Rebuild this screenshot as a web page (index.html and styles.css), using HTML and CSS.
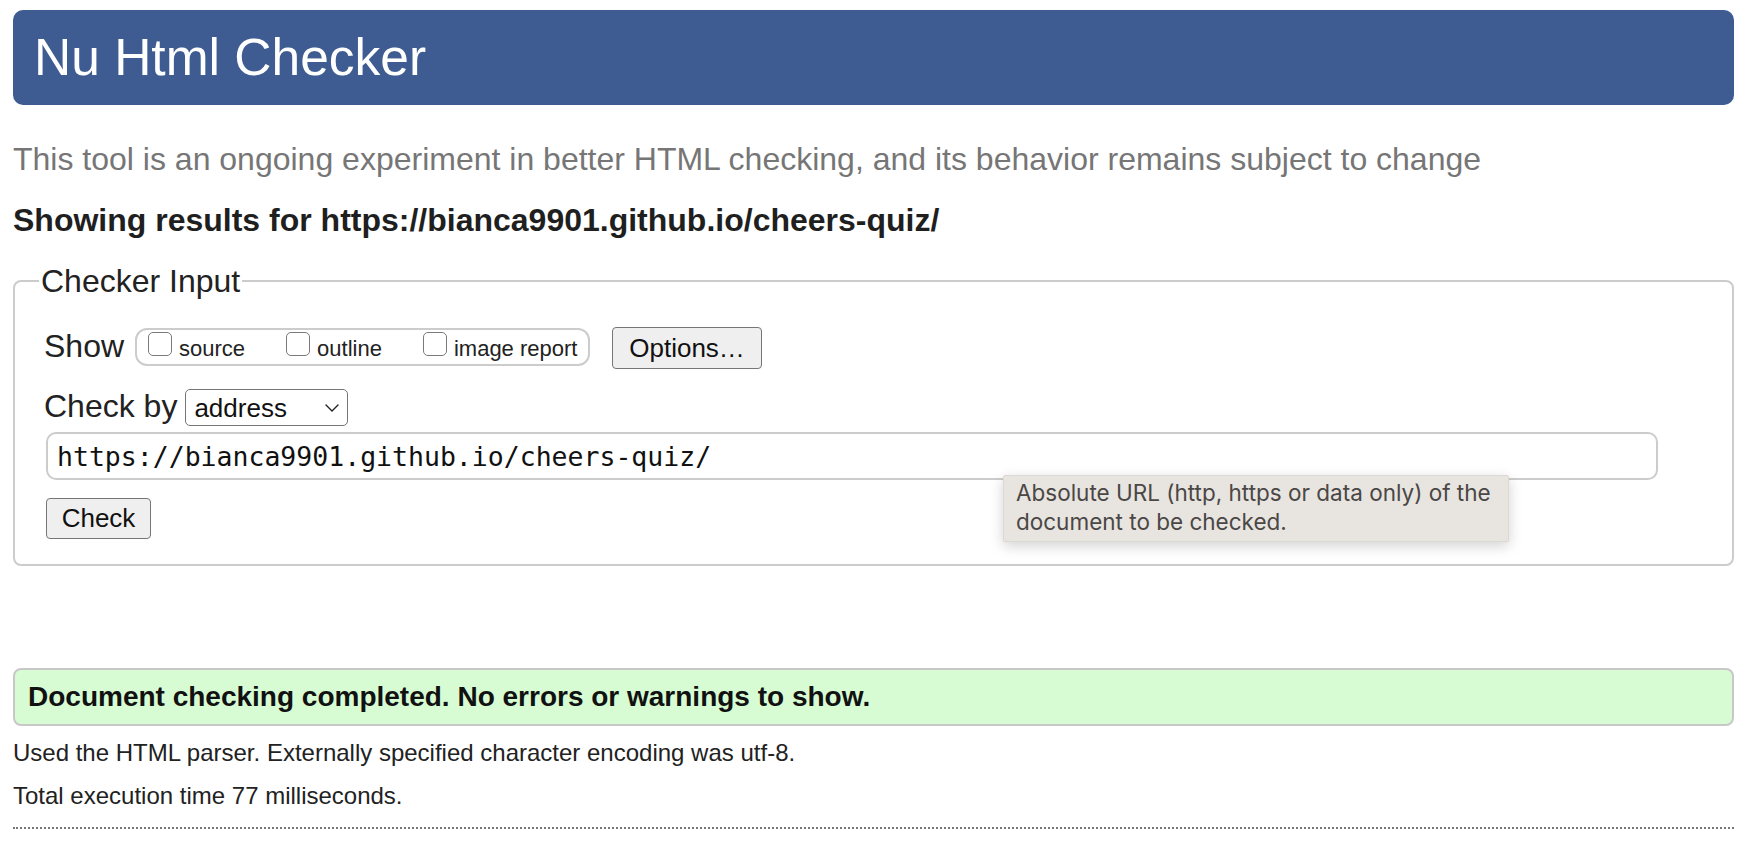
FILE: index.html
```html
<!DOCTYPE html>
<html lang="en">
<head>
<meta charset="utf-8">
<title>Nu Html Checker</title>
<link rel="stylesheet" href="styles.css">
</head>
<body>
<header class="masthead"><h1 class="title">Nu Html Checker</h1></header>
<p class="intro">This tool is an ongoing experiment in better HTML checking, and its behavior remains subject to change</p>
<p class="showing">Showing results for https://bianca9901.github.io/cheers-quiz/</p>
<form class="checker">
  <fieldset class="input-set">
    <legend class="legend">Checker Input</legend>
    <div class="row show-row">
      <span class="row-label show-label">Show</span>
      <div class="show-group">
        <label class="opt"><input type="checkbox" class="cb"><span class="opt-text">source</span></label>
        <label class="opt"><input type="checkbox" class="cb"><span class="opt-text">outline</span></label>
        <label class="opt opt-last"><input type="checkbox" class="cb"><span class="opt-text">image report</span></label>
      </div>
      <button type="button" class="btn btn-options">Options…</button>
    </div>
    <div class="row by-row">
      <label class="row-label by-label">Check by</label>
      <span class="select-wrap">
        <select class="select"><option>address</option></select>
        <svg class="chevron" width="14" height="8" viewBox="0 0 14 8"><path d="M1 1 L7 7 L13 1" fill="none" stroke="#222" stroke-width="1.4" stroke-linecap="round" stroke-linejoin="round"/></svg>
      </span>
    </div>
    <div class="url-wrap">
      <input class="url" type="text" value="https://bianca9901.github.io/cheers-quiz/">
      <div class="tooltip">Absolute URL (http, https or data only) of the<br>document to be checked.</div>
    </div>
    <div class="submit-row"><button type="button" class="btn btn-check">Check</button></div>
  </fieldset>
</form>
<div class="success">Document checking completed. No errors or warnings to show.</div>
<p class="detail detail-first">Used the HTML parser. Externally specified character encoding was utf-8.</p>
<p class="detail">Total execution time 77 milliseconds.</p>
<hr class="rule">
</body>
</html>
```
FILE: styles.css
```css
html, body {
  margin: 0;
  padding: 0;
  background: #ffffff;
}
body {
  font-family: "Liberation Sans", Arial, sans-serif;
  color: #222222;
  padding: 10px 12px 0 13px;
}
.masthead {
  background: #3e5c91;
  border-radius: 10px;
  height: 95px;
  display: flex;
  align-items: center;
  padding-left: 21px;
}
.title {
  margin: 0;
  font-size: 51.5px;
  font-weight: normal;
  color: #ffffff;
  line-height: 1;
}
.intro {
  margin: 34px 0 0;
  font-size: 32px;
  line-height: 40px;
  color: #767676;
}
.showing {
  margin: 21px 0 0;
  font-size: 32px;
  line-height: 40px;
  font-weight: bold;
  color: #1f1f1f;
}
.checker {
  margin: 21px 0 0;
}
.input-set {
  margin: 0;
  min-width: 0;
  border: 2px solid #cccccc;
  border-radius: 8px;
  padding: 26px 74px 25px 29px;
}
.legend {
  font-size: 32px;
  line-height: 40px;
  padding: 0 2px;
  margin-left: -5px;
  color: #222222;
}
.row {
  display: flex;
  align-items: center;
}
.row-label {
  font-size: 32px;
  line-height: 40px;
  color: #222222;
}
.show-row {
  height: 42px;
}
.show-label {
  margin-bottom: 4px;
}
.show-group {
  box-sizing: border-box;
  height: 38px;
  width: 455px;
  margin-left: 11px;
  margin-bottom: 2px;
  border: 2px solid #cccccc;
  border-radius: 12px;
  display: flex;
  align-items: center;
  padding: 0 10px 6px 11px;
}
.opt {
  display: flex;
  align-items: flex-end;
  margin-right: 41px;
}
.opt-last {
  margin-right: 0;
}
.cb {
  appearance: none;
  -webkit-appearance: none;
  box-sizing: border-box;
  width: 24px;
  height: 24px;
  margin: 0 7px 0 0;
  border: 1.5px solid #7a7a7a;
  border-radius: 5px;
  background: #ffffff;
}
.opt-text {
  font-size: 22px;
  line-height: 22px;
  margin-bottom: -4px;
  color: #222222;
}
.btn {
  font-family: "Liberation Sans", Arial, sans-serif;
  font-size: 26px;
  color: #111111;
  background: #efefef;
  border: 1.5px solid #767676;
  border-radius: 4px;
  box-sizing: border-box;
  padding: 0;
}
.btn-options {
  margin-left: 22px;
  width: 150px;
  height: 42px;
}
.by-row {
  margin-top: 20px;
  height: 37px;
}
.by-label {
  margin-bottom: 4px;
}
.select-wrap {
  position: relative;
  margin-left: 8px;
  display: inline-block;
  height: 37px;
}
.select {
  appearance: none;
  -webkit-appearance: none;
  box-sizing: border-box;
  width: 163px;
  height: 37px;
  font-family: "Liberation Sans", Arial, sans-serif;
  font-size: 26px;
  color: #111111;
  background: #ffffff;
  border: 1.5px solid #767676;
  border-radius: 5px;
  padding: 0 0 0 8px;
  margin: 0;
}
.chevron {
  position: absolute;
  right: 9px;
  top: 15px;
  pointer-events: none;
}
.url-wrap {
  position: relative;
  margin-top: 6px;
}
.url {
  display: block;
  box-sizing: border-box;
  width: calc(100% - 2px);
  margin: 0 0 0 2px;
  height: 48px;
  border: 2px solid #cccccc;
  border-radius: 10px;
  padding: 0 0 0 9px;
  font-family: "DejaVu Sans Mono", "Liberation Mono", monospace;
  font-size: 26.5px;
  color: #111111;
  background: #ffffff;
  outline: none;
}
.tooltip {
  position: absolute;
  left: 959px;
  top: 43px;
  box-sizing: border-box;
  width: 506px;
  height: 67px;
  padding: 2px 10px 5px 12px;
  background: #e8e4e0;
  border: 1px solid #dcd8d4;
  border-radius: 2px;
  box-shadow: 0 4px 14px rgba(0, 0, 0, 0.18);
  font-family: Inter, "Noto Sans", sans-serif;
  font-size: 22.5px;
  line-height: 29px;
  color: #4a4745;
  white-space: nowrap;
}
.submit-row {
  margin-top: 18px;
  display: flex;
}
.btn-check {
  margin-left: 2px;
  width: 105px;
  height: 41px;
}
.success {
  margin-top: 102px;
  box-sizing: border-box;
  height: 58px;
  border: 2px solid #c8c8c8;
  border-radius: 8px;
  background: #d7fcd3;
  padding-left: 13px;
  font-size: 28px;
  line-height: 54px;
  font-weight: bold;
  color: #111111;
}
.detail {
  margin: 13px 0 0;
  font-size: 24px;
  line-height: 30px;
  color: #222222;
}
.detail-first {
  margin-top: 12px;
}
.rule {
  margin: 16px 0 0;
  border: 0;
  border-top: 2px dotted #777777;
  height: 0;
}
```
